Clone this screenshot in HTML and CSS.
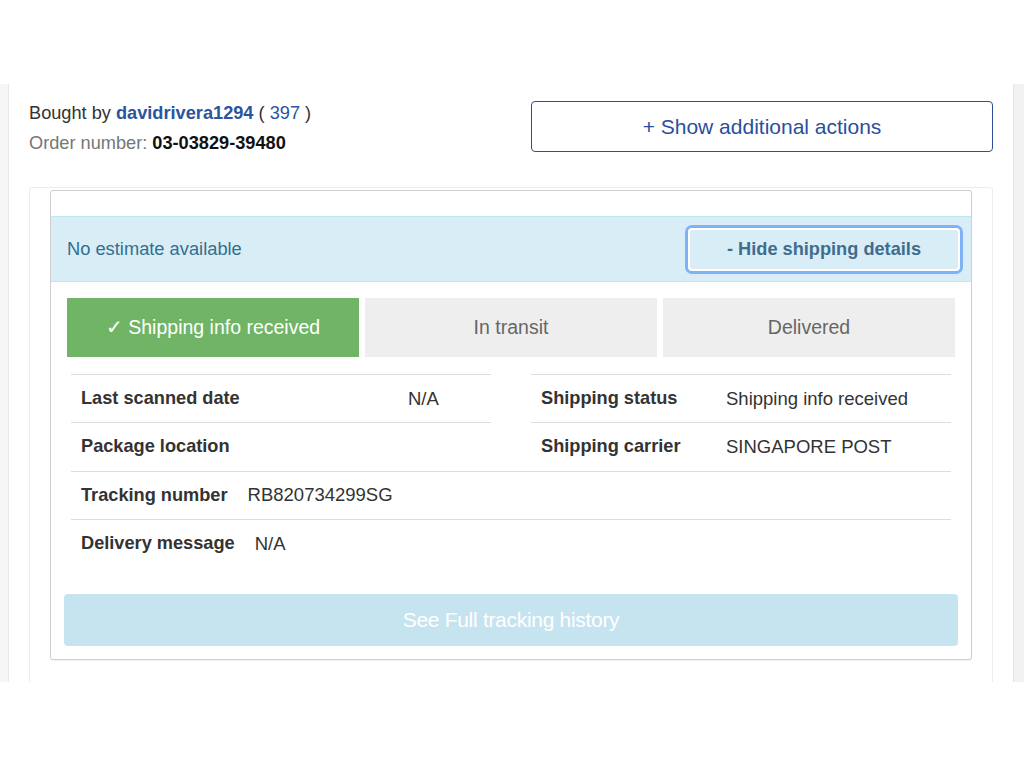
FILE: index.html
```html
<!DOCTYPE html>
<html>
<head>
<meta charset="utf-8">
<link rel="stylesheet" href="styles.css">
</head>
<body>
<div class="top-space"></div>
<div class="frame">
  <div class="strip-left"></div>
  <div class="main">
    <div class="header">
      <div class="buyer">
        <div class="bought">Bought by <a class="user">davidrivera1294</a> ( <a class="score">397</a> )</div>
        <div class="order"><span class="muted">Order number:</span> <strong>03-03829-39480</strong></div>
      </div>
      <button class="btn-actions">+ Show additional actions</button>
    </div>
    <div class="card">
      <div class="panel">
        <div class="alert">
          <span>No estimate available</span>
          <button class="btn-hide">- Hide shipping details</button>
        </div>
        <div class="body">
          <div class="steps">
            <div class="step done">✓ Shipping info received</div>
            <div class="step">In transit</div>
            <div class="step">Delivered</div>
          </div>
          <div class="details">
            <div class="cols">
              <table class="tbl left">
                <tr><th>Last scanned date</th><td>N/A</td></tr>
                <tr><th>Package location</th><td></td></tr>
              </table>
              <table class="tbl right">
                <tr><th>Shipping status</th><td>Shipping info received</td></tr>
                <tr><th>Shipping carrier</th><td>SINGAPORE POST</td></tr>
              </table>
            </div>
            <table class="tbl full">
              <tr><th>Tracking number</th><td>RB820734299SG</td></tr>
            </table>
            <table class="tbl full last">
              <tr><th>Delivery message</th><td>N/A</td></tr>
            </table>
          </div>
          <button class="btn-history" disabled>See Full tracking history</button>
        </div>
      </div>
    </div>
  </div>
  <div class="strip-right"></div>
</div>
</body>
</html>
```

FILE: styles.css
```css
* { box-sizing: border-box; }
html, body { margin: 0; padding: 0; background: #fff; }
body {
  font-family: "Liberation Sans", Arial, sans-serif;
  color: #333;
  font-size: 17px;
  width: 1024px;
  height: 768px;
  overflow: hidden;
}
.top-space { height: 84px; }
.frame {
  height: 598px;
  display: flex;
  overflow: hidden;
}
.strip-left {
  width: 9px;
  background: #f6f6f6;
  border-right: 1px solid #e8e8e8;
}
.strip-right {
  width: 11px;
  background: #f2f2f2;
  border-left: 1px solid #e4e4e4;
}
.main {
  flex: 1;
  padding: 17px 20px 0 20px;
}
.header {
  display: flex;
  justify-content: space-between;
  align-items: flex-start;
  height: 86px;
}
.buyer { margin-top: -3px; line-height: 30px; font-size: 18.2px; }
.bought { color: #333; }
.user { color: #2a55a0; font-weight: bold; text-decoration: none; }
.score { color: #2a55a0; text-decoration: none; }
.muted { color: #767676; }
.order strong { color: #111; font-weight: bold; }
.btn-actions {
  width: 462px;
  height: 51px;
  background: #fff;
  border: 1px solid #2b4f96;
  border-radius: 4px;
  color: #2a4f9c;
  font-family: inherit;
  font-size: 21px;
  padding: 0;
}
.card {
  border: 1px solid #ececec;
  border-bottom: none;
  border-radius: 4px 4px 0 0;
  height: 520px;
  padding: 2px 20px 0 20px;
}
.panel {
  border: 1px solid #cfcfcf;
  border-radius: 3px;
  box-shadow: 0 1px 1px rgba(0,0,0,0.06);
  padding-top: 25px;
  padding-bottom: 13px;
}
.alert {
  height: 66px;
  background: #d9edf7;
  border-top: 1px solid #bce8f1;
  border-bottom: 1px solid #bce8f1;
  color: #31708f;
  font-size: 18.3px;
  display: flex;
  justify-content: space-between;
  align-items: center;
  padding: 0 11px 0 16px;
}
.btn-hide {
  width: 272px;
  height: 43px;
  margin-top: 1px;
  background: #d9edf7;
  border: 2px solid #fff;
  border-radius: 4px;
  box-shadow: 0 0 0 3px #7fb1f7;
  color: #3e6d8e;
  font-family: inherit;
  font-weight: bold;
  font-size: 18.2px;
  padding: 0;
}
.body { padding: 16px 13px 0 13px; }
.steps {
  display: flex;
  gap: 6px;
  padding: 0 3px;
}
.step {
  flex: 1;
  height: 59px;
  background: #eeeeee;
  color: #666;
  font-size: 19.5px;
  display: flex;
  align-items: center;
  justify-content: center;
}
.step.done { background: #70b566; color: #fff; }
.details { padding: 17px 7px 0 7px; }
.cols {
  display: flex;
  gap: 40px;
}
.tbl {
  border-collapse: collapse;
  font-size: 18.5px;
}
.tbl th, .tbl td {
  border-top: 1px solid #dddddd;
  height: 48px;
  padding: 0 10px;
  text-align: left;
  vertical-align: middle;
  white-space: nowrap;
}
.tbl th { font-weight: bold; color: #333; font-size: 18.2px; }
.tbl td { color: #333; }
.tbl.left, .tbl.right { width: 420px; }
.tbl.left th { width: 327px; }
.tbl.right th { width: 185px; }
.tbl.full { width: 100%; }
.tbl.full th { width: 1px; }
.btn-history {
  display: block;
  width: 100%;
  height: 52px;
  margin-top: 26px;
  background: #c6e4f0;
  border: none;
  border-radius: 4px;
  color: #fff;
  font-family: inherit;
  font-size: 21px;
  letter-spacing: -0.3px;
  padding: 0;
}
```
